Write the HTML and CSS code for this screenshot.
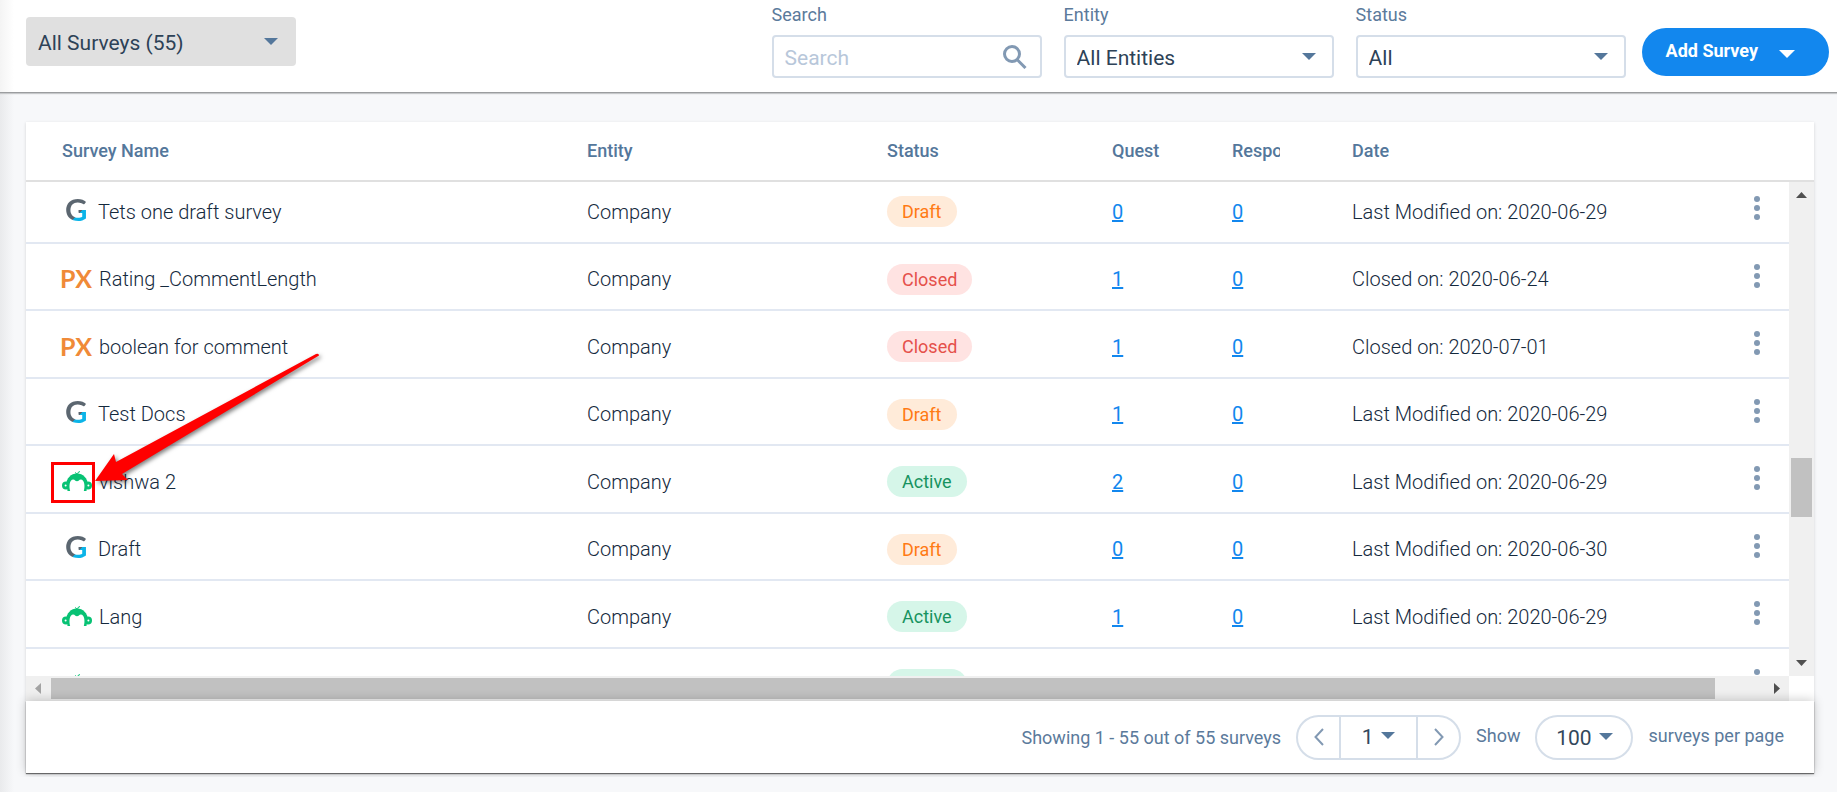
FILE: index.html
```html
<!DOCTYPE html>
<html lang="en">
<head>
<meta charset="utf-8">
<title>Surveys</title>
<link rel="stylesheet" href="styles.css">
</head>
<body>
<svg class="symbols" aria-hidden="true">
  <symbol id="caret" viewBox="0 0 14 7"><path d="M0 0h14L7 7z" fill="currentColor"/></symbol>
  <symbol id="monkey" viewBox="0 0 30 21">
    <path d="M4 14C4.500 7 9 2.500 15 2.500S25.500 7 26 14l-3 3H7z" fill="#07c274"/>
    <path d="M15.500 3.500l.5-2 2-1M15 3l-2-1.500" fill="none" stroke="#07c274" stroke-width="1"/>
    <circle cx="4" cy="14.500" r="4" fill="#07c274"/><circle cx="26" cy="14.500" r="4" fill="#07c274"/>
    <path d="M5 15h4v5H5.500zM25 15h-4v5h3.500z" fill="#07c274"/>
    <path d="M8.500 21C6.500 15.500 7.500 8.500 11.200 8.500c1.800 0 2 1.800 3.800 1.800s2-1.800 3.800-1.800c3.700 0 4.700 7 2.700 12.500z" fill="#fff"/>
    <circle cx="3.600" cy="14.500" r="1" fill="#fff"/><circle cx="26.400" cy="14.500" r="1" fill="#fff"/>
  </symbol>
  <symbol id="dots" viewBox="0 0 6 24"><g fill="#8299b3"><circle cx="3" cy="3" r="3"/><circle cx="3" cy="12" r="3"/><circle cx="3" cy="21" r="3"/></g></symbol>
</svg>

<header class="topbar">
  <div class="select select-view">
    <select aria-label="Survey list"><option>All Surveys (55)</option></select>
    <svg class="caret"><use href="#caret"/></svg>
  </div>
  <div class="filters">
    <div class="field">
      <label for="search">Search</label>
      <div class="select">
        <input id="search" type="text" placeholder="Search">
        <svg class="lens" viewBox="0 0 24 24"><circle cx="9" cy="9" r="7.500" fill="none" stroke="#8299b3" stroke-width="3"/><path d="M14 14.500l8.500 8.500" stroke="#8299b3" stroke-width="3"/></svg>
      </div>
    </div>
    <div class="field">
      <label for="entity">Entity</label>
      <div class="select">
        <select id="entity"><option>All Entities</option></select>
        <svg class="caret"><use href="#caret"/></svg>
      </div>
    </div>
    <div class="field">
      <label for="status">Status</label>
      <div class="select">
        <select id="status"><option>All</option></select>
        <svg class="caret"><use href="#caret"/></svg>
      </div>
    </div>
  </div>
  <button class="add" type="button">Add Survey <svg class="caret"><use href="#caret"/></svg></button>
</header>

<main class="card">
  <table>
    <thead>
      <tr><th>Survey Name</th><th>Entity</th><th>Status</th><th>Quest</th><th>Respo</th><th>Date</th><th></th></tr>
    </thead>
    <tbody>
      <tr>
        <td class="name"><span class="logo-g">G</span>Tets one draft survey</td><td>Company</td>
        <td><span class="chip draft">Draft</span></td><td><a href="#">0</a></td><td><a href="#">0</a></td>
        <td>Last Modified on: 2020-06-29</td><td class="menu"><button type="button" aria-label="Row menu"><svg><use href="#dots"/></svg></button></td>
      </tr>
      <tr>
        <td class="name"><span class="logo-px">PX</span>Rating _CommentLength</td><td>Company</td>
        <td><span class="chip closed">Closed</span></td><td><a href="#">1</a></td><td><a href="#">0</a></td>
        <td>Closed on: 2020-06-24</td><td class="menu"><button type="button" aria-label="Row menu"><svg><use href="#dots"/></svg></button></td>
      </tr>
      <tr>
        <td class="name"><span class="logo-px">PX</span>boolean for comment</td><td>Company</td>
        <td><span class="chip closed">Closed</span></td><td><a href="#">1</a></td><td><a href="#">0</a></td>
        <td>Closed on: 2020-07-01</td><td class="menu"><button type="button" aria-label="Row menu"><svg><use href="#dots"/></svg></button></td>
      </tr>
      <tr>
        <td class="name"><span class="logo-g">G</span>Test Docs</td><td>Company</td>
        <td><span class="chip draft">Draft</span></td><td><a href="#">1</a></td><td><a href="#">0</a></td>
        <td>Last Modified on: 2020-06-29</td><td class="menu"><button type="button" aria-label="Row menu"><svg><use href="#dots"/></svg></button></td>
      </tr>
      <tr>
        <td class="name"><svg class="monkey"><use href="#monkey"/></svg>vishwa 2</td><td>Company</td>
        <td><span class="chip active">Active</span></td><td><a href="#">2</a></td><td><a href="#">0</a></td>
        <td>Last Modified on: 2020-06-29</td><td class="menu"><button type="button" aria-label="Row menu"><svg><use href="#dots"/></svg></button></td>
      </tr>
      <tr>
        <td class="name"><span class="logo-g">G</span>Draft</td><td>Company</td>
        <td><span class="chip draft">Draft</span></td><td><a href="#">0</a></td><td><a href="#">0</a></td>
        <td>Last Modified on: 2020-06-30</td><td class="menu"><button type="button" aria-label="Row menu"><svg><use href="#dots"/></svg></button></td>
      </tr>
      <tr>
        <td class="name"><svg class="monkey"><use href="#monkey"/></svg>Lang</td><td>Company</td>
        <td><span class="chip active">Active</span></td><td><a href="#">1</a></td><td><a href="#">0</a></td>
        <td>Last Modified on: 2020-06-29</td><td class="menu"><button type="button" aria-label="Row menu"><svg><use href="#dots"/></svg></button></td>
      </tr>
      <tr>
        <td class="name"><svg class="monkey"><use href="#monkey"/></svg></td><td></td>
        <td><span class="chip chip-empty active"></span></td><td></td><td></td>
        <td></td><td class="menu"><button type="button" aria-label="Row menu"><svg><use href="#dots"/></svg></button></td>
      </tr>
    </tbody>
  </table>
  <div class="vbar" aria-hidden="true">
    <svg viewBox="0 0 25 25"><path d="M7 16h11l-5.500-6z" fill="#505050"/></svg>
    <i class="v-before"></i><i class="thumb v-thumb"></i><i class="v-after"></i>
    <svg viewBox="0 0 25 25"><path d="M7 9h11l-5.500 6z" fill="#505050"/></svg>
  </div>
  <div class="hbar" aria-hidden="true">
    <svg viewBox="0 0 25 25"><path d="M15 7v11l-6-5.500z" fill="#a3a3a3"/></svg>
    <i class="thumb h-thumb"></i><i class="h-after"></i>
    <svg viewBox="0 0 25 25"><path d="M10 7v11l6-5.500z" fill="#505050"/></svg>
  </div>
  <footer>
    <span>Showing 1 - 55 out of 55 surveys</span>
    <div class="pager">
      <button type="button" aria-label="Previous page"><svg class="chev" viewBox="0 0 10 18"><path d="M9 1L1.500 9 9 17"/></svg></button>
      <button type="button" class="page">1<svg class="caret"><use href="#caret"/></svg></button>
      <button type="button" aria-label="Next page"><svg class="chev" viewBox="0 0 10 18"><path d="M1 1l7.500 8L1 17"/></svg></button>
    </div>
    <span class="note">Show</span>
    <button type="button" class="size">100<svg class="caret"><use href="#caret"/></svg></button>
    <span class="note">surveys per page</span>
  </footer>
</main>

<svg class="callout" viewBox="0 0 276 160" aria-hidden="true">
  <rect x="1.500" y="113.500" width="41" height="38" fill="none" stroke="#f00" stroke-width="3"/>
  <path d="M44 131L63 104l2 8L265 4q3-1 3 1.500L71 124l6 6z" fill="#f00"/>
</svg>
</body>
</html>
```
FILE: styles.css
```css
* { box-sizing: border-box; }

body {
  margin: 0;
  height: 100vh;
  display: flex;
  flex-direction: column;
  position: relative;
  overflow: hidden;
  background: linear-gradient(90deg, #e9eaec, #f7f8fa 14px);
  font-family: Roboto, "Open Sans", sans-serif;
  font-size: 18px;
  color: #33475b;
}

button, input, select { font: inherit; color: inherit; margin: 0; }
button { cursor: pointer; }
.symbols { display: none; }
.caret { width: 14px; height: 7px; color: #54779b; flex: none; }

.topbar {
  display: flex;
  align-items: flex-start;
  height: 92px;
  flex: none;
  padding: 0 8px 0 26px;
  background: linear-gradient(90deg, #f4f4f4, #fff 14px);
  box-shadow: 0 1px 0 #9b9d9f, 0 2px 1px #c6c8ca;
  z-index: 1;
}

/* A control and its icon share one grid cell. */
.select { display: grid; align-items: center; width: 270px; }
.select > * { grid-area: 1 / 1; }
.select select, .select input {
  appearance: none;
  width: 100%;
  height: 43px;
  border: 2px solid #d5dee9;
  border-radius: 4px;
  background: #fff;
  padding: 2px 11px 0;
  font-size: 21px;
  color: #2d4257;
}
.select input::placeholder { color: #b8c7da; opacity: 1; }
.select svg { justify-self: end; margin-right: 18px; pointer-events: none; }
.select .lens { width: 24px; height: 24px; margin-right: 15px; }

.select-view { margin-top: 17px; }
.select-view select { height: 49px; border: 0; background: #e0e0e0; padding: 2px 12px 0; }

.filters { display: flex; gap: 22px; margin-left: auto; }
.field label { display: block; height: 35px; line-height: 30px; color: #5b7a9b; }

.add {
  display: flex;
  align-items: center;
  gap: 21px;
  height: 48px;
  margin: 28px 0 0 16px;
  padding: 0 34px 4px 24px;
  border: 0;
  border-radius: 24px;
  background: #1287ee;
  color: #fff;
  font-weight: 700;
}
.add .caret { width: 16px; height: 8px; color: #fff; margin-top: 8px; }

.card {
  flex: 1;
  min-height: 0;
  margin: 30px 23px 19px 26px;
  display: grid;
  grid-template-columns: 1fr 25px;
  grid-template-rows: auto 1fr 25px auto;
  background: #fff;
  box-shadow: 0 1px 3px rgba(0, 0, 0, .15);
}

table { display: contents; }
thead { display: block; grid-column: 1 / -1; border-bottom: 2px solid #e0e0e0; padding-right: 25px; }
tbody { display: block; min-height: 0; overflow: hidden; grid-column: 1; grid-row: 2; }
tr { display: grid; grid-template-columns: 525fr 300fr 225fr 120fr 120fr 409fr 64px; align-items: center; }
th, td { padding: 0 36px; text-align: left; white-space: nowrap; }
th { height: 58px; line-height: 58px; font-weight: 500; color: #54779b; }
thead th:nth-child(5) { padding: 0; margin: 0 36px; overflow: hidden; }
tbody tr { height: 68px; border-bottom: 2px solid #e2e8f2; }
tbody tr:nth-child(even) { height: 67px; }
tbody tr:first-child { margin-top: -6px; }
td {
  height: 100%;
  display: flex;
  align-items: center;
  padding-top: 5px;
  font-size: 20px;
  font-weight: 300;
  color: #14293d;
}
td a { color: #1287ee; font-weight: 400; }

.name { gap: 7px; }
.monkey { width: 30px; height: 21px; flex: none; }
.logo-px, .logo-g { font-family: Lato, sans-serif; font-weight: 700; width: 30px; flex: none; }
.logo-px {
  font-size: 25px;
  line-height: 30px;
  color: #f08a38;
  margin: 0 2px 2px -2px;
}
.logo-g {
  font-size: 31px;
  line-height: 36px;
  padding-left: 3px;
  margin-bottom: 6px;
  margin-right: -1px;
  background: linear-gradient(135deg, #5b6670 59%, #0cb4e8 60%);
  background-clip: text;
  -webkit-background-clip: text;
  color: transparent;
}

.chip { height: 31px; line-height: 31px; border-radius: 16px; padding: 0 15px; font-size: 18px; font-weight: 400; }
.chip-empty { width: 80px; }
.draft { background: #ffebd9; color: #ff7a14; }
.closed { background: #ffe3e2; color: #e5504a; }
.active { background: #d6f6e9; color: #16935f; }

.menu { padding: 0 0 2px; justify-content: center; }
.menu button { border: 0; background: none; padding: 0; display: flex; }
.menu svg { width: 6px; height: 24px; }

.vbar, .hbar { display: flex; background: #f0f0f0; }
.vbar { flex-direction: column; grid-column: 2; grid-row: 2; }
.hbar { grid-column: 1; grid-row: 3; }
.vbar svg, .hbar svg { width: 25px; height: 25px; flex: none; }
.thumb { background: #c1c1c1; }
.v-before { flex: 251; }
.v-thumb { flex: 59; margin: 0 2px; }
.v-after { flex: 134; }
.h-thumb { flex: 1664; margin: 2px 0; }
.h-after { flex: 49; }

footer {
  grid-column: 1 / -1;
  grid-row: 4;
  height: 72px;
  display: flex;
  align-items: center;
  justify-content: flex-end;
  gap: 15px;
  padding-right: 30px;
  background: #fff;
  color: #5b7a9b;
  box-shadow: 0 1px 1px rgba(0, 0, 0, .5), 0 -1px 10px rgba(0, 0, 0, .2);
  clip-path: inset(-14px -14px -4px -14px);
}
.note { padding-bottom: 3px; }
.pager { display: flex; height: 45px; width: 165px; border: 2px solid #d5dee9; border-radius: 23px; overflow: hidden; }
.pager button { border: 0; background: none; padding: 0; display: flex; align-items: center; justify-content: center; flex: 1; }
.pager .page { flex: none; width: 79px; border: solid #d5dee9; border-width: 0 2px; gap: 8px; font-size: 21px; color: #33475b; }
.chev { width: 10px; height: 18px; fill: none; stroke: #8299b3; stroke-width: 2; }
.size {
  display: flex;
  align-items: center;
  justify-content: center;
  gap: 7px;
  width: 98px;
  height: 45px;
  padding: 2px 0 0;
  border: 2px solid #d5dee9;
  border-radius: 23px;
  background: #fff;
  font-size: 21px;
  color: #33475b;
}
.pager .caret, .size .caret { margin-bottom: 3px; }

.callout {
  position: absolute;
  left: 51px;
  top: 350px;
  width: 276px;
  height: 160px;
  z-index: 2;
  pointer-events: none;
}
.callout path { filter: drop-shadow(2px 2px 2px rgba(0, 0, 0, .5)); }
```
